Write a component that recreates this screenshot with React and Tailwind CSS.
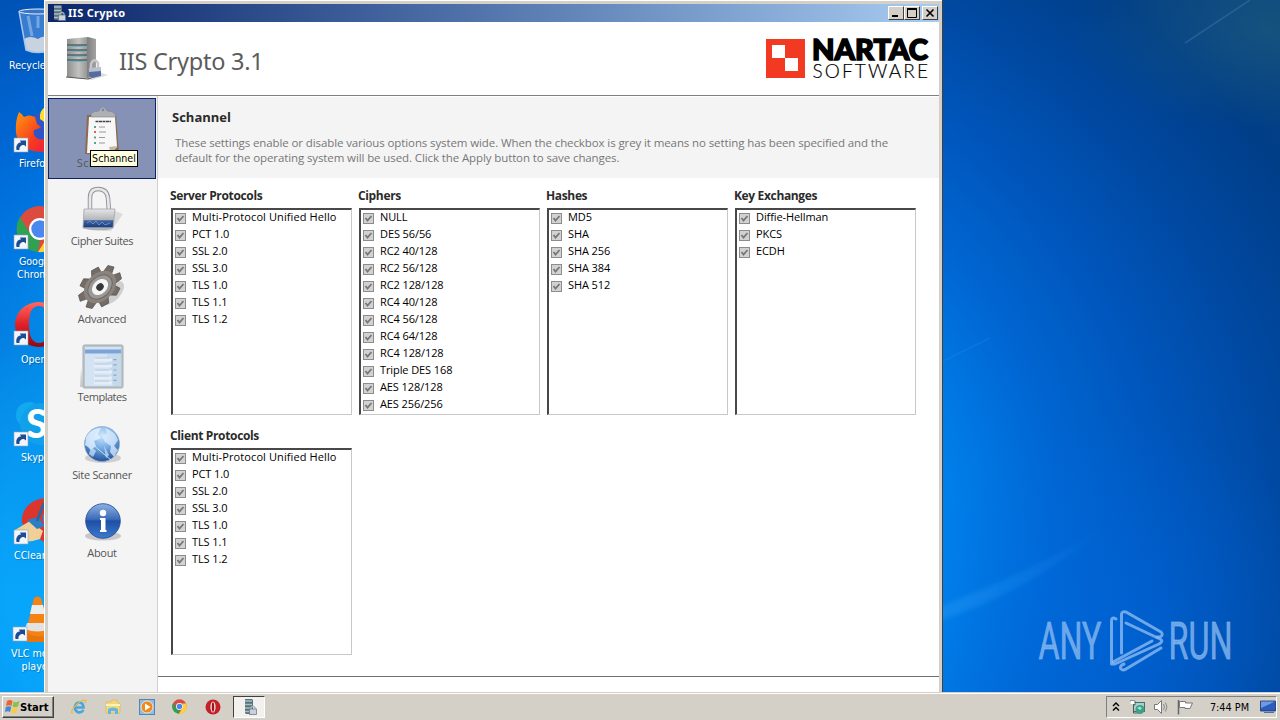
const protocols = ["Multi-Protocol Unified Hello", "PCT 1.0", "SSL 2.0", "SSL 3.0", "TLS 1.0", "TLS 1.1", "TLS 1.2"];

const topLists = [
  { title: "Server Protocols", items: protocols },
  {
    title: "Ciphers",
    items: [
      "NULL", "DES 56/56", "RC2 40/128", "RC2 56/128", "RC2 128/128", "RC4 40/128",
      "RC4 56/128", "RC4 64/128", "RC4 128/128", "Triple DES 168", "AES 128/128", "AES 256/256",
    ],
  },
  { title: "Hashes", items: ["MD5", "SHA", "SHA 256", "SHA 384", "SHA 512"] },
  { title: "Key Exchanges", items: ["Diffie-Hellman", "PKCS", "ECDH"] },
];

/* ---------- Desktop ---------- */

const Wallpaper = () => (
  <svg className="absolute inset-0" width="1280" height="692">
    <defs>
      <radialGradient id="sky" gradientUnits="userSpaceOnUse" cx="0" cy="0" r="1" gradientTransform="translate(400 540) scale(1100 850)">
        <stop offset="0.36" stopColor="#08a6fb" />
        <stop offset="0.41" stopColor="#069cf6" />
        <stop offset="0.5" stopColor="#007fea" />
        <stop offset="0.6" stopColor="#0066d2" />
        <stop offset="0.7" stopColor="#0056bc" />
        <stop offset="0.8" stopColor="#0049a2" />
        <stop offset="0.91" stopColor="#003e88" />
        <stop offset="1" stopColor="#08427e" />
      </radialGradient>
      <linearGradient id="leftShade" x1="0" x2="0" y1="0" y2="1">
        <stop offset="0" stopColor="#0050bc" stopOpacity="0" />
        <stop offset=".5" stopColor="#0050bc" stopOpacity=".3" />
        <stop offset="1" stopColor="#0050bc" stopOpacity="0" />
      </linearGradient>
      <linearGradient id="streak" x1="0" x2="1">
        <stop offset="0" stopColor="#2aa0f5" stopOpacity=".4" />
        <stop offset="1" stopColor="#2aa0f5" stopOpacity="0" />
      </linearGradient>
      <radialGradient id="haze">
        <stop offset="0" stopColor="#30707c" stopOpacity=".35" />
        <stop offset="1" stopColor="#30707c" stopOpacity="0" />
      </radialGradient>
      <radialGradient id="glow">
        <stop offset="0" stopColor="#0068e0" stopOpacity=".5" />
        <stop offset="1" stopColor="#0068e0" stopOpacity="0" />
      </radialGradient>
      <filter id="soft"><feGaussianBlur stdDeviation="2.500" /></filter>
    </defs>
    <rect width="1280" height="692" fill="url(#sky)" />
    <rect width="44" height="520" y="80" fill="url(#leftShade)" />
    <ellipse cx="1120" cy="640" rx="220" ry="220" fill="url(#glow)" />
    <ellipse cx="1270" cy="30" rx="200" ry="100" fill="url(#haze)" />
    <path d="M930 610Q1020 578 1110 524Q1030 592 930 624Z" fill="url(#streak)" filter="url(#soft)" />
    <path d="M943 361L990 338" stroke="#2b90ec" strokeOpacity=".25" strokeWidth="1.500" />
    <path d="M1185 43L1250 0" stroke="#5c8cc4" strokeOpacity=".3" strokeWidth="1.500" />
  </svg>
);

const Shortcut = () => (
  <g transform="translate(-1 29)">
    <rect width="14" height="14" fill="#f2f5fa" stroke="#8fa3bd" strokeWidth=".6" />
    <path d="M2.500 12C1.500 7 4 4.500 7 4.500L6 2.500H12V8.500L10 7C7 7 5 9 5.500 12Z" fill="#1c4c93" />
  </g>
);

const RecycleIcon = () => (
  <svg width="48" height="48" viewBox="0 0 48 48">
    <path d="M5 3L12 41Q24 47 36 41L43 3Z" fill="#5e96dc" fillOpacity=".6" />
    <path d="M10 31L12 42Q24 47 36 42L38 31Q30 26 24 31Q16 27 10 31Z" fill="#d9dbe0" fillOpacity=".9" />
    <path d="M5 3L12 42Q24 47 36 42L43 3" fill="none" stroke="#a9c6e8" strokeWidth="1.500" />
    <ellipse cx="24" cy="3.500" rx="19" ry="2.500" fill="#3b74c4" stroke="#e6eef8" />
    <path d="M14 8L18 28M24 8V20" stroke="#d3e4f7" strokeOpacity=".4" strokeWidth="3" />
  </svg>
);

const FirefoxIcon = () => (
  <svg width="48" height="48" viewBox="0 0 48 48" overflow="visible">
    <defs>
      <linearGradient id="fox" x1="0" x2="1" y1="0.200" y2="1">
        <stop offset="0" stopColor="#ff8a12" />
        <stop offset=".5" stopColor="#f8391f" />
        <stop offset="1" stopColor="#e01250" />
      </linearGradient>
    </defs>
    <circle cx="29" cy="20" r="17" fill="#2d55c8" />
    <path d="M25 10Q24 2 30 -2Q42 0 46 14L44 30Q38 18 25 10Z" fill="#ffdf2e" />
    <path d="M4 3Q7 5 9 8Q14 5 20 8L22 15L26 18Q24 20 19 21Q17 26 23 30Q30 32 44 24Q44 42 26 43Q4 42 1 24Q0 12 4 3Z" fill="url(#fox)" />
    <Shortcut />
  </svg>
);

const ChromeShape = () => (
  <g>
    <circle cx="24" cy="24" r="23" fill="#dd4b3e" />
    <path d="M4 12L15 30L24 34L22 47A23 23 0 0 1 4 12Z" fill="#2fa152" />
    <path d="M22 47L34 28V14H45A23 23 0 0 1 22 47Z" fill="#fdd23e" />
    <circle cx="24" cy="24" r="11" fill="#fff" />
    <circle cx="24" cy="24" r="8.700" fill="#4a87ee" />
  </g>
);

const ChromeIcon = () => (
  <svg width="48" height="48" viewBox="0 0 48 48" overflow="visible">
    <g transform="translate(1 -1)"><ChromeShape /></g>
    <Shortcut />
  </svg>
);

const OperaIcon = () => (
  <svg width="48" height="48" viewBox="0 0 48 48" overflow="visible">
    <defs>
      <linearGradient id="opera" x1="0" x2="0" y1="0" y2="1">
        <stop offset="0" stopColor="#ff6a60" />
        <stop offset=".5" stopColor="#e02028" />
        <stop offset="1" stopColor="#8e0a12" />
      </linearGradient>
    </defs>
    <path fillRule="evenodd" d="M24 0A24 22.500 0 1 0 24 45A24 22.500 0 1 0 24 0ZM24 4Q34 4 34 22.500Q34 41 24 41Q14 41 14 22.500Q14 4 24 4Z" fill="url(#opera)" />
    <Shortcut />
  </svg>
);

const SkypeIcon = () => (
  <svg width="48" height="48" viewBox="0 0 48 48" overflow="visible">
    <circle cx="14" cy="12" r="13" fill="#12a9ee" />
    <circle cx="26" cy="21" r="21" fill="#12a0ea" />
    <text x="11" y="35" fontFamily="Lato, sans-serif" fontWeight="900" fontSize="39" fill="#fff">S</text>
    <Shortcut />
  </svg>
);

const CCleanerIcon = () => (
  <svg width="48" height="48" viewBox="0 0 48 48" overflow="visible">
    <path d="M40 -1A24 22 0 0 0 7 22L14 30L30 42L44 40L40 24Q26 26 28 14Q32 10 44 12Z" fill="#dc352d" />
    <path d="M0 29L15 20L28 30L25 38Q14 42 4 40Z" fill="#f1cf98" />
    <path d="M12 19L23 16L30 25L22 28Z" fill="#2d7fc4" />
    <path d="M22 20L29 2" stroke="#28699f" strokeWidth="3" />
    <Shortcut />
  </svg>
);

const VlcIcon = () => (
  <svg width="48" height="48" viewBox="0 0 48 48" overflow="visible">
    <path d="M11 31H39L43 44H13Z" fill="#e8750c" />
    <path d="M20 0Q23 -3 27 0L36 36Q24 42 12 34Z" fill="#f58212" />
    <path d="M18 7H29L31 16H16Z" fill="#ececec" />
    <path d="M13 25H33L35 31Q24 36 11 31Z" fill="#e2e2e2" />
    <Shortcut />
  </svg>
);

const desktopIcons = [
  { icon: <RecycleIcon />, label: "Recycle Bin", pos: "left-[14px] top-[8px]", text: "left-[9px] top-[59px]" },
  { icon: <FirefoxIcon />, label: "Firefox", pos: "left-[15px] top-[109px]", text: "left-[19px] top-[157px]" },
  { icon: <ChromeIcon />, label: "Google", second: "Chrome", pos: "left-[15px] top-[206px]", text: "left-[17px] top-[255px]" },
  { icon: <OperaIcon />, label: "Opera", pos: "left-[15px] top-[302px]", text: "left-[21px] top-[353px]" },
  { icon: <SkypeIcon />, label: "Skype", pos: "left-[15px] top-[403px]", text: "left-[21px] top-[451px]" },
  { icon: <CCleanerIcon />, label: "CCleaner", pos: "left-[15px] top-[501px]", text: "left-[14px] top-[549px]" },
  { icon: <VlcIcon />, label: "VLC media", second: "player", pos: "left-[14px] top-[598px]", text: "left-[11px] top-[647px]" },
];

const DesktopIcon = ({ item }) => (
  <>
    <div className={`absolute ${item.pos}`}>{item.icon}</div>
    <div className={`absolute ${item.text} text-center font-['DejaVu_Sans_Condensed',sans-serif] text-[10.6px] leading-[13px] whitespace-nowrap text-white [text-shadow:1px_1px_1px_#0004]`}>
      <div>{item.label}</div>
      {item.second && <div>{item.second}</div>}
    </div>
  </>
);

const Watermark = () => (
  <svg className="absolute top-[590px] left-[1020px]" width="240" height="100" viewBox="1020 590 240 100">
    <g fill="#8abaf0" fillOpacity=".8" stroke="#8abaf0" strokeOpacity=".6" strokeWidth=".9" fontFamily="Roboto, sans-serif" fontSize="51.500">
      <text x="1038.500" y="659" textLength="63" lengthAdjust="spacingAndGlyphs">ANY</text>
      <text x="1168.500" y="659" textLength="64" lengthAdjust="spacingAndGlyphs">RUN</text>
    </g>
    <g fill="none" stroke="#8abaf0" strokeOpacity=".8" strokeWidth="3" strokeLinejoin="round" strokeLinecap="round">
      <path d="M1116 619Q1111 616 1111.500 622V664H1115L1159 644Q1164 641 1160 639L1126 623" />
      <path d="M1121.500 653V614Q1122 611 1126 612L1161 632Q1164 635 1160 637L1157 637" />
      <path d="M1113 662L1152 641" />
      <path d="M1124 664Q1119 666 1121 669Q1123 671 1126 669L1161 648" />
    </g>
  </svg>
);

/* ---------- Window icons ---------- */

const ServerSmall = ({ className }) => (
  <svg className={className} width="16" height="16" viewBox="0 0 16 16">
    <path d="M3 0H10L11 1V15H4L3 14Z" fill="#57717a" />
    <path d="M3 2H10M3 5.500H10M3 9H10M3 12.500H8" stroke="#a9c0c3" strokeWidth="1.300" />
    <path d="M9 10V8.500Q11 6.500 13 8.500V10" fill="none" stroke="#a8b4bd" strokeWidth="1.200" />
    <rect x="7.500" y="10" width="7" height="5.500" fill="#c9d2da" stroke="#5d6f80" strokeWidth=".7" />
  </svg>
);

const ServerLarge = () => (
  <svg width="44" height="46" viewBox="0 0 44 46">
    <defs>
      <linearGradient id="metal" x1="0" x2="1">
        <stop offset="0" stopColor="#8e8e8e" />
        <stop offset=".4" stopColor="#c2c2c0" />
        <stop offset=".68" stopColor="#989898" />
        <stop offset=".7" stopColor="#808080" />
        <stop offset="1" stopColor="#a2a2a2" />
      </linearGradient>
    </defs>
    <path d="M2 41L26 44L42 39L32 36Z" fill="#ddd" />
    <path d="M1 3L22 1L30 3V39L22 42L1 41Z" fill="url(#metal)" />
    <path d="M0 41L22 43L30 40" fill="none" stroke="#555" strokeWidth="1.200" />
    <path d="M1 9H21M1 14H21M1 19H21M1 24H21" stroke="#5a5f61" strokeWidth="1.500" />
    <path d="M2 10.500H21M2 15.500H21M2 20.500H21M2 25.500H21" stroke="#69b4c6" strokeWidth="1" />
    <path d="M25 33V28Q28 21 32 27V33" fill="none" stroke="#c6c6cb" strokeWidth="2.500" />
    <path d="M23 32L35 31V40L26 42L23 40Z" fill="#b7c1d2" />
    <path d="M23 36L35 35V40L26 42L23 40Z" fill="#566c9e" />
  </svg>
);

const ClipboardIcon = () => (
  <svg width="48" height="48" viewBox="0 0 48 48">
    <path d="M9 8H38L41 47H7Z" fill="#8d6b52" />
    <path d="M11 10H37L39 40L33 46H9Z" fill="#f7f7f8" />
    <path d="M39 39L31 40L33 47Z" fill="#c5b7a5" />
    <path d="M13 7Q15 4 21 4Q22 0 25 0Q28 0 29 4Q35 4 37 7L38 10H13Z" fill="#aeb0b4" stroke="#808288" strokeWidth=".6" />
    <circle cx="25" cy="3" r="1.300" fill="#7683ad" />
    <path d="M17.500 14.500H33" stroke="#444" strokeWidth="1.500" strokeDasharray="3 .5" />
    <path d="M21 20H27M21 25H28M21 30.500H27M21 36H27" stroke="#999" />
    <path d="M16 19h2v2h-2zM16 29.500h2v2h-2zM16 35h2v2h-2z" fill="#56a58a" />
    <path d="M16 24h2v2h-2z" fill="#e36053" />
  </svg>
);

const PadlockIcon = () => (
  <svg width="48" height="48" viewBox="0 0 48 48" overflow="visible">
    <defs>
      <linearGradient id="lock" x1="0" x2="0" y1="0" y2="1">
        <stop offset="0" stopColor="#e5e5e7" />
        <stop offset=".5" stopColor="#b4b6b9" />
        <stop offset=".56" stopColor="#3e65a1" />
        <stop offset=".84" stopColor="#1d417e" />
        <stop offset=".9" stopColor="#aeb5c0" />
      </linearGradient>
    </defs>
    <path d="M34 25L45 29L33 46L24 46Z" fill="#000" opacity=".1" />
    <path d="M12 27V13Q12 4 20 4Q29 4 30 13L31 27" fill="none" stroke="#909297" strokeWidth="4.500" />
    <path d="M12 27V13Q12 4 20 4Q29 4 30 13L31 27" fill="none" stroke="#e8e8ea" strokeWidth="2.700" />
    <path d="M6 24H37L35 43Q21 47 5 43Z" fill="url(#lock)" stroke="#a3a5a8" strokeWidth=".8" />
    <path d="M9 38L12 36L15 39L18 36L21 40L24 37L27 40L32 38" fill="none" stroke="#7c9ccb" strokeWidth=".8" />
  </svg>
);

const GearIcon = () => (
  <svg width="48" height="48" viewBox="0 0 48 48" overflow="visible">
    <ellipse cx="34" cy="30" rx="15" ry="8" fill="#000" opacity=".15" transform="rotate(-45 34 30)" />
    <g transform="translate(22 24) rotate(-45) scale(1.160 .84)">
      {[22, 67, 112, 157, 202, 247, 292, 337].map((deg) => (
        <path key={deg} d="M-5 -13L-3.500 -21H3.500L5 -13Z" fill="#746c66" stroke="#4c4642" strokeWidth=".6" transform={`rotate(${deg})`} />
      ))}
      <circle r="16" fill="#8a837d" />
      <circle r="12" fill="#9c9895" stroke="#6e6a67" />
      <circle r="8" fill="#f5f5f5" />
      <ellipse rx="3.500" ry="4" fill="#37383a" />
    </g>
  </svg>
);

const TemplateIcon = () => (
  <svg width="48" height="48" viewBox="0 0 48 48" overflow="visible">
    <path d="M3 28L5 46H2Z" fill="#ccc" />
    <rect x="5" y="4" width="40" height="43" rx="1.500" fill="#bac4c9" stroke="#a4adb1" />
    <rect x="7" y="6" width="36" height="39" fill="#d3e3f3" />
    <path d="M7 8.500H43V12.500H7Z" fill="#7ba3d8" />
    <path d="M29 13H43V45H35Z" fill="#bdd5e8" opacity=".7" />
    <path d="M16 19H34M16 25H34M16 31H34M16 37H34M16 42H34" stroke="#e4eef9" strokeWidth="3" />
    <path d="M17 17H31M17 23H31M17 29H31M17 35H31M17 40H31" stroke="#b5c4d0" strokeWidth=".8" />
    <path d="M37 18V41" stroke="#8aa5c0" strokeWidth="3" strokeDasharray="1.200 4" />
  </svg>
);

const GlobeIcon = () => (
  <svg width="48" height="48" viewBox="0 0 48 48" overflow="visible">
    <defs>
      <radialGradient id="globe" cx=".5" cy=".25" r=".8">
        <stop offset="0" stopColor="#d0e6fc" />
        <stop offset=".45" stopColor="#78aee6" />
        <stop offset="1" stopColor="#16458f" />
      </radialGradient>
    </defs>
    <ellipse cx="25" cy="39" rx="18" ry="5" fill="#000" opacity=".15" />
    <circle cx="24" cy="25" r="17.500" fill="url(#globe)" stroke="#89a9ce" strokeWidth=".7" />
    <path d="M8 18Q13 9 23 9L20 15L23 19L16 22L18 27L13 31L10 28L7 26Z" fill="#e6f4ff" opacity=".8" />
    <path d="M27 9Q37 12 40 21L36 27L40 31L36 38L32 33L33 27L27 23L24 17L29 14Z" fill="#dceeff" opacity=".75" />
    <path d="M11 35Q13 26 18 32L15 38ZM26 27L31 36L28 39Z" fill="#d1e6fa" opacity=".7" />
    <path d="M14 25L33 41" stroke="#c6e0f8" strokeWidth="1" />
  </svg>
);

const InfoIcon = () => (
  <svg width="48" height="48" viewBox="0 0 48 48" overflow="visible">
    <defs>
      <linearGradient id="info" x1="0" x2="0" y1="0" y2="1">
        <stop offset="0" stopColor="#8fb2e4" />
        <stop offset=".45" stopColor="#3a6cb9" />
        <stop offset=".5" stopColor="#1f4fa3" />
        <stop offset="1" stopColor="#3b7ad0" />
      </linearGradient>
    </defs>
    <ellipse cx="25" cy="39" rx="18" ry="4.500" fill="#000" opacity=".18" />
    <circle cx="25" cy="24" r="17.300" fill="url(#info)" stroke="#1b4791" strokeWidth=".8" />
    <circle cx="25" cy="16" r="3.200" fill="#fff" />
    <path d="M22 21H27.500V33H28.500V35H22V33H23V23H22Z" fill="#fff" />
  </svg>
);

const navItems = [
  { label: "Schannel", icon: <ClipboardIcon />, tracking: "tracking-[0.5px]" },
  { label: "Cipher Suites", icon: <PadlockIcon />, tracking: "tracking-[-0.4px]" },
  { label: "Advanced", icon: <GearIcon />, tracking: "tracking-[-0.2px]" },
  { label: "Templates", icon: <TemplateIcon />, tracking: "tracking-[-0.5px]" },
  { label: "Site Scanner", icon: <GlobeIcon />, tracking: "tracking-[-0.3px]" },
  { label: "About", icon: <InfoIcon />, tracking: "tracking-[-0.3px]" },
];

/* ---------- Window parts ---------- */

const CaptionButton = ({ children }) => (
  <div className="flex h-[14px] w-4 items-center justify-center border border-t-white border-r-[#404040] border-b-[#404040] border-l-white bg-[#d4d0c8]">
    {children}
  </div>
);

const TitleBar = () => (
  <div className="flex h-[18px] items-center bg-linear-to-r from-[#0d266b] to-[#a8ccf0] pr-[1px] pl-[3px]">
    <ServerSmall />
    <span className="ml-px pb-[2px] font-['Noto_Sans',sans-serif] text-[11px] leading-none font-bold tracking-[0.3px] text-white">IIS Crypto</span>
    <div className="ml-auto flex">
      <CaptionButton>
        <svg width="12" height="10"><path d="M2 8H8" stroke="#000" strokeWidth="2" /></svg>
      </CaptionButton>
      <CaptionButton>
        <svg width="12" height="10"><path d="M1.500 1V9.500H10.500V1" fill="none" stroke="#000" /><path d="M1 1H11" stroke="#000" strokeWidth="2" /></svg>
      </CaptionButton>
      <div className="ml-[2px]">
        <CaptionButton>
          <svg width="12" height="10"><path d="M2.500 1.500L9.500 8.500M9.500 1.500L2.500 8.500" stroke="#000" strokeWidth="1.600" /></svg>
        </CaptionButton>
      </div>
    </div>
  </div>
);

const NartacLogo = () => (
  <svg width="170" height="50" viewBox="0 0 170 50">
    <rect width="39" height="39" y="5" fill="#f23a22" />
    <path d="M6 11H19V24H6ZM19 24H32V37H19Z" fill="#fff" />
    <g fontFamily="Lato, sans-serif" fill="#000">
      <text x="46" y="25.500" fontSize="27.500" fontWeight="900" stroke="#000" strokeWidth="1.500" textLength="116" lengthAdjust="spacingAndGlyphs">NARTAC</text>
      <text x="46.500" y="44" fontSize="19" fontWeight="300" stroke="#000" strokeWidth=".2" textLength="115.500" lengthAdjust="spacing">SOFTWARE</text>
    </g>
  </svg>
);

const Header = () => (
  <div className="flex h-[74px] items-center border-b border-[#808080] bg-white pr-[3px] pl-[18px]">
    <ServerLarge />
    <h1 className="ml-[9px] pt-1 font-['Noto_Sans',sans-serif] text-[23.5px] leading-8 font-normal tracking-[-0.25px] text-[#5c5c5c]">IIS Crypto 3.1</h1>
    <div className="ml-auto">
      <NartacLogo />
    </div>
  </div>
);

const Sidebar = () => (
  <div className="w-[110px] shrink-0 border-r border-[#d0d0d0] bg-[#f4f4f4] pt-[2px]">
    {navItems.map((item, index) => (
      <div
        key={item.label}
        className={
          index === 0
            ? "relative -mb-[3px] flex h-[81px] w-[108px] flex-col items-center border border-[#0a246a] bg-[#8592b5] pt-[8px]"
            : "flex h-[78px] w-[108px] flex-col items-center pt-[9px]"
        }
      >
        {item.icon}
        <span className={`font-['Open_Sans',sans-serif] text-[11px] leading-4 text-[#555] ${item.tracking}`}>{item.label}</span>
        {index === 0 && (
          <div className="absolute top-[51px] left-[41px] flex h-[17px] w-[48px] items-center justify-center border border-black bg-[#ffffe1] font-['DejaVu_Sans_Condensed',sans-serif] text-[10.6px] leading-none text-black">
            Schannel
          </div>
        )}
      </div>
    ))}
  </div>
);

const CheckRow = ({ label }) => (
  <div className="flex h-[17px] items-center">
    <svg width="11" height="11" viewBox="0 0 11 11">
      <rect x=".5" y=".5" width="10" height="10" fill="#d2d2d2" stroke="#8c8c8c" />
      <path d="M2.500 5L4.500 7.500L8.500 3" fill="none" stroke="#777" strokeWidth="1.800" />
    </svg>
    <span className={`ml-[6px] pb-[5px] font-['Open_Sans',sans-serif] text-[11px] leading-none whitespace-nowrap text-black ${label.length > 20 ? "tracking-[0.1px]" : "tracking-[-0.1px]"}`}>
      {label}
    </span>
  </div>
);

const CheckList = ({ title, items }) => (
  <div className="w-[181px]">
    <h3 className="-ml-px h-[20px] font-['Open_Sans',sans-serif] text-[12px] leading-4 font-bold tracking-[-0.35px] whitespace-nowrap text-[#2b2b2b]">{title}</h3>
    <div className="h-[207px] border-t-2 border-r border-b border-l-2 border-t-[#484848] border-r-[#c8c8c8] border-b-[#c8c8c8] border-l-[#484848] bg-white pl-[2px]">
      {items.map((item) => (
        <CheckRow key={item} label={item} />
      ))}
    </div>
  </div>
);

const AppWindow = () => (
  <div className="absolute top-0 left-[44px] flex h-[692px] w-[899px] flex-col border-r border-r-[#404040] bg-[#d4d0c8] pt-[4px] pr-[3px] pl-[4px] shadow-[inset_1px_1px_0_#fff]">
    <TitleBar />
    <Header />
    <div className="flex flex-1 bg-white">
      <Sidebar />
      <div className="flex flex-1 flex-col">
        <div className="mt-px h-[81px] bg-[#f4f4f4] pt-[12px] pl-[14px] font-['Open_Sans',sans-serif]">
          <h2 className="text-[13px] leading-[17px] font-bold text-[#2b2b2b]">Schannel</h2>
          <p className="mt-[9px] pl-[3px] text-[11.5px] leading-[15px] tracking-[-0.105px] whitespace-nowrap text-[#777]">
            These settings enable or disable various options system wide. When the checkbox is grey it means no setting has been specified and the
            <br />
            default for the operating system will be used. Click the Apply button to save changes.
          </p>
        </div>
        <div className="flex gap-[7px] pt-[10px] pl-[13px]">
          {topLists.map((list) => (
            <CheckList key={list.title} title={list.title} items={list.items} />
          ))}
        </div>
        <div className="pt-[13px] pl-[13px]">
          <CheckList title="Client Protocols" items={protocols} />
        </div>
        <div className="mt-[21px] border-t border-[#707070]" />
      </div>
    </div>
  </div>
);

/* ---------- Taskbar ---------- */

const Taskbar = () => (
  <div className="relative flex h-[28px] items-center border-t border-[#d4d0c8] bg-[#d4d0c8] pr-[3px] pl-[2px] shadow-[inset_0_1px_0_#fff]">
    <div className="flex h-[22px] w-[52px] items-center border border-t-white border-r-[#404040] border-b-[#404040] border-l-white pl-[2px] shadow-[inset_-1px_-1px_0_#808080]">
      <svg width="15" height="15" viewBox="0 0 15 15">
        <path d="M2 2Q5 0 7.500 2L6.500 7Q4 5.500 1 7Z" fill="#ee6332" />
        <path d="M8.500 2.500Q11 4 14.500 2L13 7.500Q10 9 7.500 7.500Z" fill="#8bc04a" />
        <path d="M.8 8Q4 6.500 6.300 8L5 13Q3 11.500 0 13Z" fill="#4189d6" />
        <path d="M7.300 8.500Q10 10 12.800 8.500L11.500 13.500Q8.500 15 6 13.500Z" fill="#fbcb3e" />
      </svg>
      <span className="pt-[2px] font-['DejaVu_Sans_Condensed',sans-serif] text-[11.200px] leading-none font-bold text-black">Start</span>
    </div>
    <div className="ml-[17px] flex items-center gap-[17.800px]">
      <svg width="16" height="16" viewBox="0 0 16 16">
        <path d="M12.500 11Q10 14.500 6.500 13Q3 11 4 7Q5.500 3 9 3.500Q12.500 4.500 12.500 8.500H4" fill="none" stroke="#48a6de" strokeWidth="2.600" />
        <path d="M2 14Q-1 14 2.500 9Q8 2 13 1Q16 1 14 4" fill="none" stroke="#e9b93c" strokeWidth="1.200" />
      </svg>
      <svg width="16" height="16" viewBox="0 0 16 16">
        <path d="M1 3H6L7 1H12L13 4H15V14H1Z" fill="#f2d67a" stroke="#d6b75b" strokeWidth=".6" />
        <path d="M1 6H15" stroke="#fff4b6" strokeWidth="2" />
        <path d="M3 15V10Q8 7 13 10V15H10V12H6V15Z" fill="#61b6e4" />
      </svg>
      <svg width="16" height="16" viewBox="0 0 16 16">
        <rect x=".5" y=".5" width="15" height="15" fill="#8dbde5" stroke="#4e86bd" />
        <circle cx="8" cy="8" r="6" fill="#f28a1b" stroke="#fff" strokeWidth=".7" />
        <path d="M6 4.500L11.500 8L6 11.500Z" fill="#fff" />
      </svg>
      <svg width="15" height="15" viewBox="0 0 48 48"><ChromeShape /></svg>
      <svg width="16" height="16" viewBox="0 0 16 16">
        <circle cx="8" cy="8" r="7.500" fill="#c51f28" />
        <ellipse cx="8" cy="8" rx="2.600" ry="5.500" fill="#f4dfdc" />
        <ellipse cx="8" cy="8" rx="1.200" ry="4.700" fill="#9b141c" />
      </svg>
    </div>
    <div className="ml-[12px] flex h-[22px] w-[32px] items-center justify-center border border-t-[#404040] border-r-white border-b-white border-l-[#404040] bg-[#f3f1ee] pl-[2px]">
      <ServerSmall />
    </div>
    <div className="ml-auto flex h-[22px] w-[171px] items-center border border-t-[#808080] border-r-white border-b-white border-l-[#808080] pl-[5px]">
      <svg width="8" height="10" viewBox="0 0 8 10">
        <path d="M1 4L4 1L7 4M1 8.500L4 5.500L7 8.500" fill="none" stroke="#000" strokeWidth="1.400" />
      </svg>
      <svg className="ml-[9px]" width="17" height="16" viewBox="0 0 17 16">
        <rect x="4.500" y="3.500" width="11" height="9" fill="#a9d2ca" stroke="#3d7071" />
        <path d="M1 2H6V6H4.500V14H9" fill="none" stroke="#4e5a58" />
        <path d="M1.500 2V5H5.500V2Z" fill="#fff" />
        <circle cx="11" cy="10.500" r="4.500" fill="#3c9f86" />
        <path d="M8 9L11 7.500L13 9.500L11 11Z" fill="#a5e0cf" />
      </svg>
      <svg className="ml-[7px]" width="18" height="16" viewBox="0 0 18 16">
        <path d="M1.500 5.500H4.500L8.500 1.500V14.500L4.500 10.500H1.500Z" fill="#fff" stroke="#777" />
        <path d="M10.500 5Q12.500 8 10.500 11M12.500 3.500Q15.500 8 12.500 12.500" fill="none" stroke="#888" />
      </svg>
      <svg className="ml-[6px]" width="17" height="16" viewBox="0 0 17 16">
        <path d="M1.500 1V15.500" stroke="#666" strokeWidth="1.500" />
        <path d="M2.500 2.500H8.500V4H15.500L13 9.500H8V8.500H2.500Z" fill="#fff" stroke="#777" />
      </svg>
      <span className="ml-[16px] pt-[3px] font-['DejaVu_Sans_Condensed',sans-serif] text-[10.800px] leading-none whitespace-nowrap text-black">7:44 PM</span>
      <svg className="ml-[11px]" width="16" height="14" viewBox="0 0 16 14">
        <path d="M.5 1H15.500V11H.5Z" fill="#2a5dbd" stroke="#16346e" strokeWidth=".8" />
        <path d="M1 1.500H15L1 8Z" fill="#6f9be2" />
        <path d="M4 12.500H14" stroke="#4d6c9e" />
      </svg>
    </div>
  </div>
);

const App = () => {
  return (
    <div className="flex h-[720px] w-[1280px] flex-col overflow-hidden">
      <div className="relative h-[692px] overflow-hidden">
        <Wallpaper />
        {desktopIcons.map((item) => (
          <DesktopIcon key={item.label} item={item} />
        ))}
        <Watermark />
        <AppWindow />
      </div>
      <Taskbar />
    </div>
  );
};

export default App;
